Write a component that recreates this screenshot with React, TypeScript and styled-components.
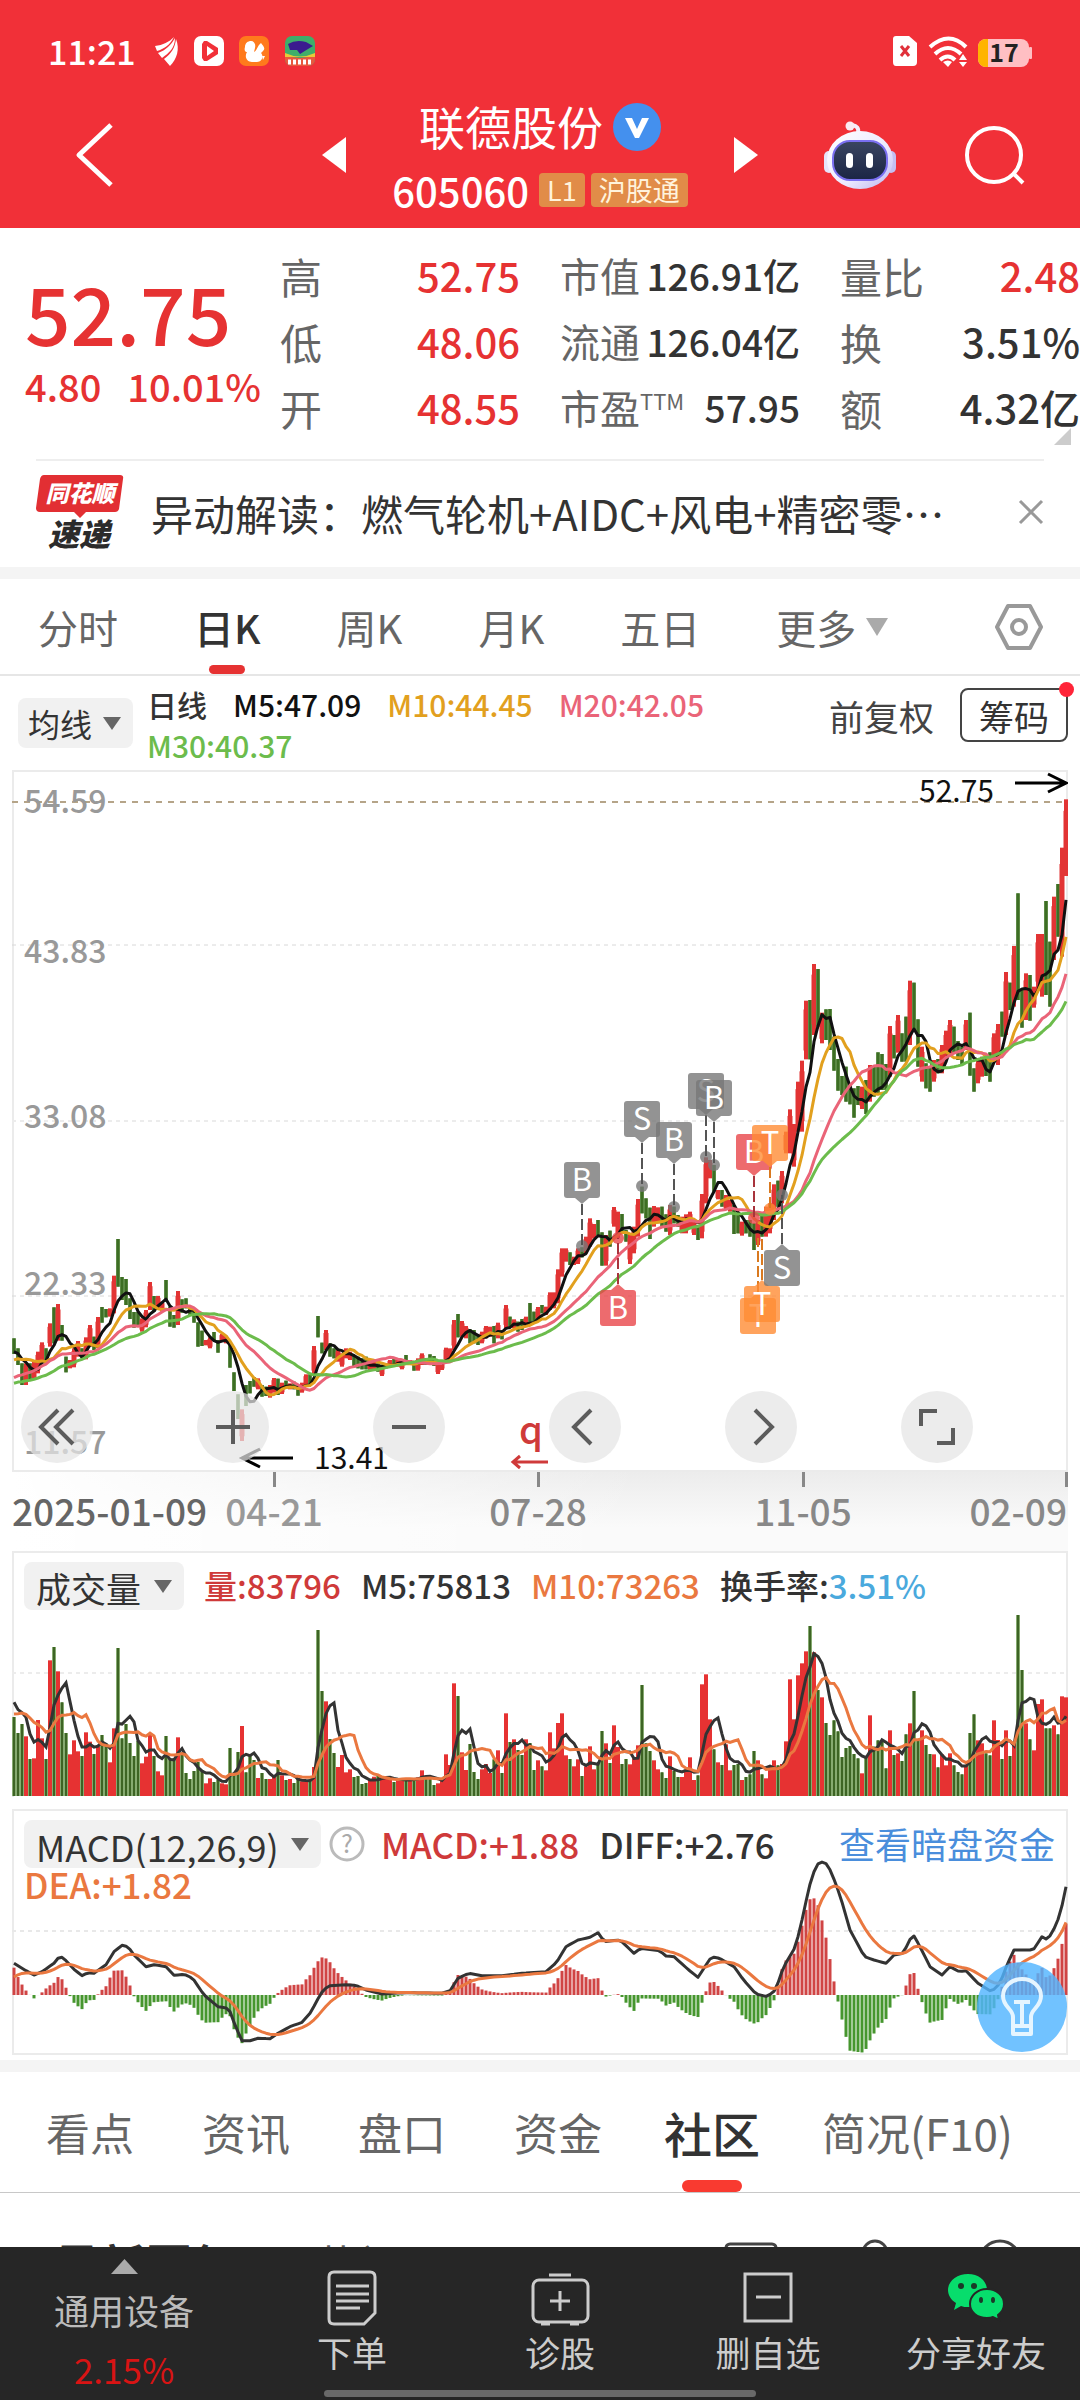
import React from "react";
import styled, { createGlobalStyle, css } from "styled-components";

/* ---------- market data ---------- */

type Bar = { v: number; up: boolean; high: number; low: number; close: number };

// Volume bar tops (768 is the floor) with the day's direction.
const VOLUME_SRC = `531g 579g 552g 589r 657g 655r 540r 595r 657g 361r 321g 394r 487g 579g 643r 601r 634r 648g 577r 605r 642g 619r
585g 610g 667r 565r 324g 595g 552g 609g 648g 603g 670r 650r 579r 648g 694r 706r 588g 655g 655g 592r 637g 699g 717g 693g 666g 690g
730r 715r 726g 719g 730r 733r 624g 700g 636g 558r 697g 645g 660g 714r 699g 717g 717r 706r 660g 706r 720g 717r 729g 715g 724r 724r
718g 681r 270g 453g 484r 597g 639g 681r 645r 697r 688r 711g 708g 732g 729g 720r 710r 706g 712r 715r 717r 726g 718r 718r 720g 718r
717g 712r 691r 709g 715g 735g 730r 718r 643r 675r 430r 468g 637r 690r 612g 696g 717g 688r 672r 699r 658g 631r 699g 520r 606g 598r
630g 645g 598r 609g 690g 661r 679g 691r 577r 625r 549r 520r 646r 657g 679r 658r 708g 679r 619r 688r 670g 573g 610r 669g 556r 621r
672g 657g 673r 655r 616r 435g 610g 633g 661r 688r 697g 714g 649r 693g 711g 711r 690r 652r 720r 706g 433r 403r 538r 628g 667r 675g
613r 691r 675g 672g 720r 711g 703g 633g 661r 703g 715r 679r 661r 676g 672r 604r 418r 538r 406r 370r 334r 258g 337r 450g 472r 549g
585g 541g 574g 651g 624g 618g 642g 655g 700r 651g 526r 620g 601g 601g 685g 571r 645g 640r 663g 583g 550r 453g 600g 571r 615g 642g
643r 682g 643r 676r 640r 676g 696g 703g 676r 579g 523g 601r 610r 640g 646g 541r 600r 657g 571r 648g 610r 225g 390g 550r 598g 631r
492r 478r 565g 565g 556r 583g 469r 472r`;

// High-low ranges, grouped by the level each block is measured from.
const RANGE_BLOCKS: { base: number; src: string }[] = [
  {
    base: 1080,
    src: `625-672 655-705 700-765 700-765 700-750 695-750 665-730 637-690 655-700 580-650 532-640 522-632 585-632 680-727 690-715
655-712 633-680 655-685 622-688 585-650 620-660 561-655 531-578 537-562 535-560 437-550 327-470 441-510 447-525 505-567 546-593
546-590 565-605 540-592 456-540 498-545 498-535 515-545 450-515 530-590 555-593 483-585 508-548 505-535 535-555 540-578 577-650
602-648 630-646 622-655 606-632 630-668 612-635 617-640 645-713 727-783 793-867 838-933 765-828 753-790 741-770 745-778 765-800
770-798 765-803 744-788 746-795 758-792 752-775 760-778 755-778 765-797 758-788 733-770 733-765 648-735 558-622 638-670 600-660
640-680 655-685 660-695 670-710 655-685 665-690 675-712 680-715 685-718 680-718 690-720 695-722 700-725 705-738 700-715 690-708
685-705 685-710 692-718 675-705 690-705 695-722 685-722 670-705 685-705 673-705 678-708 695-732 690-720 653-695 655-690 570-660
552-622 573-620 588-625 598-640 600-640 615-645 605-640 588-625 590-620 588-640 578-625 600-628 525-595 560-590 568-595 575-605
567-600 560-590 519-575 545-575 531-570`,
  },
  {
    base: 870,
    src: `735-760 740-765 697-750 697-745 628-730 565-650 565-605 577-615 590-615 565-612 562-592 530-580 475-560 492-535 480-525
517-617 525-617 512-560 441-500 455-535 462-520 510-545 520-612 500-580 417-530 380-460 415-475 443-537 438-500 442-490 440-498
463-515 435-525 440-490 465-500 470-520 463-520 455-505 480-525 495-540 402-535 292-430 300-355 315-395 390-418 390-440 405-450
420-455 435-522 465-520 485-527 480-520 480-530 490-570 480-555 465-530 440-530 430-520 373-480 362-440 333-430 215-280 148-280
192-320 65-215 2-215`,
  },
  {
    base: -30,
    src: `722-898 720-898 612-825 627-800 758-850 748-840 747-870 830-932 897-992 948-1005 920-1025 970-1033 985-1073 978-1035
980-1047 960-1062 915-1025 920-1010 877-1000 882-990 912-990 798-950 825-895 765-878 820-905 770-905 662-855 668-810 778-920
860-965 910-985 920-995 900-965 897-940 855-940 812-900 780-880 800-880 843-900 860-912 780-870 758-947 925-995 900-970 890-950
885-948 877-965 820-900 792-915 755-830 636-825 668-750 558-740 400-720 690-803 640-780 645-782 680-743 522-690 522-710 423-705
545-740 410-600 372-530 263-590 118-348`,
  },
];

const volumes = VOLUME_SRC.trim().split(/\s+/);
const ranges = RANGE_BLOCKS.flatMap(({ base, src }) =>
  src.trim().split(/\s+/).map((r) => r.split("-").map((n) => (Number(n) + base) / 3)),
);

const bars: Bar[] = volumes.map((token, i) => {
  const up = token.endsWith("r");
  const [high, low] = ranges[i] ?? ranges[ranges.length - 1];
  const span = low - high;
  return {
    v: (768 - parseInt(token, 10)) / 3,
    up,
    high,
    low,
    close: up ? high + span * 0.22 : low - span * 0.22,
  };
});
bars[bars.length - 1].close = bars[bars.length - 1].high;

const PITCH = 4;
const xAt = (i: number) => 2 + i * PITCH;

function movingAverage(values: number[], history: number[], n: number) {
  const all = [...history, ...values];
  return values.map((_, i) => {
    const end = i + history.length + 1;
    const part = all.slice(Math.max(0, end - n), end);
    return part.reduce((a, b) => a + b, 0) / part.length;
  });
}

const toPoints = (ys: number[]) => ys.map((y, i) => `${xAt(i)},${y.toFixed(1)}`).join(" ");

const priceHistory = [
  ...Array(10).fill(624), ...Array(10).fill(628), ...Array(5).fill(602), ...Array(5).fill(582),
];
const closes = bars.map((b) => b.close);
const vols = bars.map((b) => b.v);
const volumeHistory = [60, 66, 72, 74, 79, 100, 87, 83, 120];

// DIFF curve as [bar, level] knots; DEA is its 9-day EMA.
const DIFF_KNOTS: [number, number][] = [
  [0, 490], [3, 512], [5, 525], [7, 515], [10, 490], [11.5, 467], [13, 482], [15, 508], [17, 527], [18.5, 518], [20, 520],
  [23, 494], [25, 455], [27, 436], [28.5, 440], [30, 465], [33, 500], [35, 494], [38, 500], [40, 526], [42.6, 523],
  [44.7, 535], [47.5, 585], [51, 620], [53.7, 625], [55.4, 680], [57, 722], [59, 722], [61, 715], [64, 716], [66, 700],
  [69, 680], [72, 667], [74, 640], [75.4, 610], [76.7, 580], [78.5, 558], [82.6, 554], [85.5, 556], [88, 570], [92, 582],
  [98, 578], [107, 580], [109, 572], [111, 535], [113.6, 520], [117, 527], [122, 527], [127, 520], [133, 515], [135.6, 488],
  [138, 440], [141, 420], [144, 412], [146, 398], [147.6, 425], [151.5, 420], [155, 460], [156.6, 445], [161.4, 452],
  [163, 468], [165, 470], [168.7, 510], [171, 532], [173, 495], [174.4, 470], [176.4, 475], [180, 500], [182.4, 540],
  [185.5, 582], [188.3, 590], [190.4, 570], [192.4, 500], [195.4, 440], [197, 360], [198.8, 260], [200.4, 200], [201.4, 186],
  [202.8, 187], [204.3, 215], [206.6, 290], [209, 390], [212.6, 470], [215, 480], [218, 490], [220, 465], [222.4, 460],
  [223.8, 420], [225, 408], [226.5, 440], [229, 500], [232, 525], [234, 500], [236.3, 515], [238, 512], [241, 550],
  [244.4, 575], [246.5, 550], [248.4, 490], [250, 450], [254.8, 450], [257, 410], [258.4, 420], [260.3, 380], [261.6, 340],
  [263, 260],
];

const diff = bars.map((_, i) => {
  const k = Math.max(1, DIFF_KNOTS.findIndex(([x]) => x >= i));
  const [x0, y0] = DIFF_KNOTS[k - 1];
  const [x1, y1] = DIFF_KNOTS[k];
  return (y0 + ((y1 - y0) * (i - x0)) / (x1 - x0)) / 3 - 9;
});
const dea = diff.reduce<number[]>((acc, d, i) => {
  acc.push(i === 0 ? 168 : acc[i - 1] * 0.8 + d * 0.2);
  return acc;
}, []);
const MACD_ZERO = 186;

/* ---------- styles ---------- */

const GlobalStyle = createGlobalStyle`
  *, *::before, *::after { box-sizing: border-box; }
  body { margin: 0; background: #fff; font-family: "Noto Sans CJK SC", "Noto Sans", sans-serif; color: #333; }
  button, select { font: inherit; color: inherit; background: none; border: 0; margin: 0; padding: 0; cursor: pointer; }
  a { color: inherit; text-decoration: none; }
  svg { display: block; flex: none; }
  svg text { font-family: "Noto Sans CJK SC", "Noto Sans", sans-serif; }
`;

const RED = "#e63232";

const Screen = styled.div`
  display: flex;
  flex-direction: column;
  height: 100vh;
  overflow: hidden;
  white-space: nowrap;
`;

const Header = styled.header`
  flex: none;
  background: #f13038;
  color: #fff;
`;

const StatusBar = styled.div`
  display: flex;
  justify-content: space-between;
  align-items: center;
  height: 102px;
  padding: 0 48px;
`;

const StatusGroup = styled.div`
  display: flex;
  align-items: center;
  gap: 18px;
`;

const Clock = styled.span`
  font-size: 34px;
  font-weight: 500;
  line-height: 36px;
`;

const Nav = styled.nav`
  display: grid;
  grid-template-columns: 1fr 436px 1fr;
  height: 126px;
  padding: 0 55px 20px;
  align-items: center;
`;

const BackButton = styled.button`
  justify-self: start;
  padding-left: 15px;
`;

const NavEnd = styled.div`
  display: flex;
  justify-content: flex-end;
  align-items: center;
  gap: 69px;
`;

const Switcher = styled.div`
  display: flex;
  justify-content: space-between;
  align-items: center;
`;

const StockTitle = styled.div`
  display: flex;
  flex-direction: column;
  align-items: center;
  gap: 20px;
`;

const TitleLine = styled.div`
  display: flex;
  align-items: center;
  gap: 10px;
`;

const Name = styled.h1`
  margin: 0;
  padding-bottom: 4px;
  font-size: 46px;
  font-weight: 400;
  line-height: 46px;
`;

const CodeLine = styled(TitleLine)`
  gap: 6px;
`;

const Code = styled.span`
  margin-right: 4px;
  font-size: 40px;
  font-weight: 500;
  line-height: 36px;
`;

const Tag = styled.span`
  padding: 0 8px;
  border-radius: 4px;
  background: #e18c48;
  color: #fff3dc;
  font-size: 27px;
  line-height: 34px;
`;

const Quote = styled.section`
  position: relative;
  flex: none;
  display: grid;
  grid-template-columns: minmax(0, 1fr) repeat(3, 240px);
  column-gap: 40px;
  height: 231px;
  padding: 14px 0 0 25px;
`;

const Last = styled.div`
  display: flex;
  flex-direction: column;
  padding-top: 25px;
  color: ${RED};
`;

const Price = styled.strong`
  font-size: 80px;
  font-weight: 500;
  line-height: 88px;
`;

const Change = styled.div`
  display: flex;
  gap: 26px;
  font-size: 38px;
  font-weight: 500;
  line-height: 62px;
`;

const Stats = styled.dl<{ $label: number; $value: number }>`
  margin: 0;
  dt { font-size: ${(p) => p.$label}px; }
  dd { font-size: ${(p) => p.$value}px; }
`;

const StatRow = styled.div`
  display: flex;
  justify-content: space-between;
  align-items: center;
  height: 66px;
`;

const StatLabel = styled.dt`
  color: #666;
  sup { font-size: 22px; line-height: 1; vertical-align: 14px; }
`;

const StatValue = styled.dd<{ $red?: boolean }>`
  margin: 0;
  font-weight: 500;
  color: ${(p) => (p.$red ? RED : "#333")};
`;

const Corner = styled.i`
  position: absolute;
  right: 9px;
  bottom: 14px;
  border: solid transparent;
  border-width: 0 0 17px 17px;
  border-bottom-color: #ccc;
`;

const News = styled.section`
  flex: none;
  display: flex;
  align-items: center;
  height: 108px;
  margin: 0 36px;
  padding-bottom: 4px;
  border-top: 2px solid #eee;
`;

const NewsLink = styled.a`
  flex: 1;
  margin-left: 27px;
  font-size: 42px;
`;

const Band = styled.div`
  flex: none;
  height: 12px;
  background: #f4f4f4;
`;

const LowerBand = styled(Band)`
  margin-top: 5px;
`;

const PeriodTabs = styled.nav`
  flex: none;
  display: flex;
  align-items: stretch;
  gap: 76px;
  height: 97px;
  padding: 0 36px 0 38px;
  border-bottom: 2px solid #e6e6e6;
`;

const Tab = styled.button<{ $active?: boolean; $bar?: number; $color?: string }>`
  position: relative;
  display: flex;
  align-items: center;
  gap: 10px;
  color: #666;
  ${(p) =>
    p.$active &&
    css`
      color: #333;
      font-weight: 500;
      &::after {
        content: "";
        position: absolute;
        bottom: 0;
        left: 50%;
        width: ${p.$bar}px;
        height: ${p.$bar! > 40 ? 12 : 9}px;
        margin-left: -${p.$bar! / 2}px;
        border-radius: 6px;
        background: ${p.$color};
      }
    `}
`;

const PeriodTab = styled(Tab)`
  font-size: 40px;
`;

const Settings = styled.button`
  margin-left: auto;
`;

const MaRow = styled.section`
  flex: none;
  display: flex;
  height: 94px;
  padding: 0 12px 0 18px;
`;

const Pill = styled.label<{ $size: number }>`
  display: inline-flex;
  align-items: center;
  height: 48px;
  padding: 0 12px;
  gap: 12px;
  border-radius: 8px;
  background: #f1f1f1;
  font-size: ${(p) => p.$size}px;
  select { appearance: none; height: 48px; color: #333; outline: 0; }
`;

const MaPill = styled(Pill)`
  height: 50px;
  margin-top: 22px;
  padding: 0 12px 0 10px;
  gap: 10px;
`;

const MaValues = styled.div`
  flex: 1;
  display: flex;
  flex-wrap: wrap;
  align-content: flex-start;
  column-gap: 26px;
  padding: 8px 80px 0 14px;
`;

const Legend = styled.span<{ $c: string }>`
  color: ${(p) => p.$c};
  font-weight: 500;
  line-height: 41px;
  b { font-weight: 500; color: #4aa9dd; }
`;

const MaLegend = styled(Legend)`
  font-size: 30px;
`;

const MaActions = styled.div`
  display: flex;
  align-items: flex-start;
  gap: 26px;
  padding-top: 12px;
  font-size: 35px;
`;

const Plain = styled.button`
  height: 54px;
  color: #444;
`;

const ChipButton = styled.button`
  position: relative;
  width: 108px;
  height: 54px;
  border: 2px solid #444;
  border-radius: 8px;
  &::after {
    content: "";
    position: absolute;
    top: -8px;
    right: -8px;
    width: 15px;
    height: 15px;
    border-radius: 50%;
    background: #ff2438;
  }
`;

const Panel = styled.section`
  position: relative;
  flex: none;
  margin: 0 12px;
`;

const FullSvg = styled.svg`
  width: 100%;
  height: auto;
`;

const Controls = styled.div`
  position: absolute;
  left: 9px;
  right: 95px;
  bottom: 9px;
  display: flex;
  justify-content: space-between;
`;

const Round = styled.button`
  display: grid;
  place-items: center;
  width: 72px;
  height: 72px;
  border-radius: 50%;
  background: rgba(228, 228, 228, 0.72);
`;

const DateAxis = styled.div`
  flex: none;
  height: 79px;
  margin: 0 12px;
  background: linear-gradient(90deg, #fff, rgba(255, 255, 255, 0) 60%), linear-gradient(180deg, #ececec, #fafafa 70%);
`;

const VolumePanel = styled(Panel)`
  height: 246px;
  border: 2px solid #ebebeb;
  border-bottom: 0;
`;

const VolumeChart = styled(FullSvg)`
  margin: 0 -2px;
  width: calc(100% + 4px);
`;

const LegendRow = styled.div`
  display: flex;
  align-items: center;
  height: 48px;
  margin-top: 9px;
  padding-left: 10px;
  gap: 20px;
  font-size: 33px;
  ${Legend} { padding-bottom: 2px; }
`;

const MacdPanel = styled(Panel)`
  display: grid;
  margin-top: 12px;
  & > * { grid-area: 1 / 1; }
`;

const MacdInfo = styled.div`
  position: relative;
  padding: 2px 13px 0 2px;
`;

const MacdRow = styled(LegendRow)`
  font-size: 35px;
`;

const HelpButton = styled.button`
  margin: 0 -4px 0 -12px;
`;

const DarkPool = styled.a`
  margin-left: auto;
  padding-bottom: 2px;
  font-size: 36px;
  color: #4a8edc;
`;

const DeaRow = styled.div`
  padding-left: 10px;
  font-size: 35px;
  line-height: 32px;
  ${Legend} { line-height: 32px; }
`;

const Bulb = styled.button`
  position: absolute;
  right: 1px;
  bottom: 3px;
  width: 90px;
  height: 90px;
  border-radius: 50%;
  background: rgba(82, 181, 255, 0.82);
  display: grid;
  place-items: center;
`;

const SectionTabs = styled.nav`
  flex: none;
  display: flex;
  gap: 68px;
  height: 121px;
  padding-left: 46px;
  border-bottom: 1px solid #c8c8c8;
`;

const SectionTab = styled(Tab)`
  font-size: ${(p) => (p.$active ? 48 : 44)}px;
  margin: ${(p) => (p.$active ? "0 -6px" : "0")};
`;

const Feed = styled.section`
  flex: 1;
  min-height: 0;
  overflow: hidden;
  display: flex;
  align-items: flex-start;
  gap: 80px;
  padding: 40px 58px 0 54px;
`;

const FeedTab = styled.button<{ $on?: boolean }>`
  font-size: ${(p) => (p.$on ? 46 : 42)}px;
  font-weight: ${(p) => (p.$on ? 700 : 400)};
  line-height: 60px;
  color: ${(p) => (p.$on ? "#333" : "#666")};
`;

const FeedIcons = styled.div`
  display: flex;
  gap: 80px;
  margin-left: auto;
  padding-top: 6px;
`;

const BottomBar = styled.footer`
  position: relative;
  flex: none;
  display: grid;
  grid-template-columns: 248fr repeat(4, 208fr);
  height: 153px;
  background: #262626;
  color: #ccc;
  font-size: 35px;
  &::after {
    content: "";
    position: absolute;
    left: 30%;
    right: 30%;
    bottom: 3px;
    height: 7px;
    border-radius: 4px;
    background: #696969;
  }
`;

const Sector = styled.button`
  display: flex;
  flex-direction: column;
  align-items: center;
  padding-top: 12px;
  color: #bbb;
  line-height: 59px;
  svg { margin-bottom: 6px; }
  em { font-style: normal; color: #d81414; }
`;

const Action = styled.button`
  display: flex;
  flex-direction: column;
  align-items: center;
  padding-top: 22px;
  line-height: 50px;
`;

/* ---------- icons ---------- */

const Caret = ({ w = 18, h = 13, color = "#666", up = false }) => (
  <svg width={w} height={h} viewBox="0 0 18 14" preserveAspectRatio="none">
    <path d={up ? "M9 0 18 14H0z" : "M0 0h18L9 14z"} fill={color} />
  </svg>
);

const Robot = () => (
  <svg width="72" height="68" viewBox="0 0 72 68">
    <defs>
      <linearGradient id="shell" x1="0" y1="0" x2="1" y2="1">
        <stop offset="0" stopColor="#fff" />
        <stop offset="0.6" stopColor="#eceaff" />
        <stop offset="1" stopColor="#b9b2ee" />
      </linearGradient>
      <linearGradient id="face" x1="0" y1="0" x2="0" y2="1">
        <stop offset="0" stopColor="#3a4560" />
        <stop offset="1" stopColor="#1b2545" />
      </linearGradient>
    </defs>
    <path d="M34 12c1-5-1-7-6-8" fill="none" stroke="#f4eefc" strokeWidth="4" strokeLinecap="round" />
    <circle cx="26" cy="5" r="4.5" fill="#fbeaf2" />
    <rect x="0" y="30" width="10" height="22" rx="5" fill="#e6e4fb" />
    <rect x="62" y="30" width="10" height="22" rx="5" fill="#c4bff2" />
    <ellipse cx="36" cy="39" rx="33" ry="29" fill="url(#shell)" />
    <rect x="9" y="20" width="54" height="39" rx="17" fill="url(#face)" stroke="#7a6ff0" strokeWidth="2" />
    <rect x="22" y="32" width="7" height="15" rx="3.5" fill="#fff" />
    <rect x="42" y="32" width="7" height="15" rx="3.5" fill="#fff" />
  </svg>
);

const Logo = () => (
  <svg width="88" height="76" viewBox="0 0 88 76" role="img" aria-label="同花顺速递">
    <path d="M8 1h76q4 0 3 4l-4 30q-1 3-4 3H50l-6 6-6-6H4q-4 0-4-4L4 5q1-4 4-4z" fill="#e22f33" />
    <text x="44" y="28" textAnchor="middle" fontSize="23" fontWeight="900" fontStyle="italic" fill="#fff">同花顺</text>
    <text x="43" y="72" textAnchor="middle" fontSize="31" fontWeight="900" fontStyle="italic" fill="#2b2b2b">速递</text>
  </svg>
);

const StatusLeft = () => (
  <svg width="162" height="32" viewBox="0 0 162 32">
    <path d="M1 11C9 10 15 7 20 2c-4 8-10 12-17 14zM4 18c8-3 13-8 17-15 0 10-6 15-13 20zM10 24c7-5 11-11 12-20 4 10 1 20-6 27z" fill="#fff" />
    <rect x="40" y="1" width="30" height="30" rx="7" fill="#fff" />
    <path d="M50 6h3l11 7v6l-11 7h-3l-2-3V9z" fill="#f13038" />
    <path d="M53 11v10l7-5z" fill="#fff" />
    <rect x="85" y="1" width="30" height="30" rx="7" fill="#ff7a1c" />
    <path d="M91 12c0-4 3-6 6-6s5 3 4 7l-1 4c3-1 3-6 7-9 2 3 5 5 2 8l-2 2c3 3 1 9-4 9h-5c-5 0-8-5-5-10-2 0-3-2-2-5z" fill="#fff" />
    <path d="M108 21l3 0-2 4z" fill="#fff" />
    <rect x="131" y="1" width="30" height="30" rx="7" fill="#3fae6a" />
    <path d="M131 20q15 6 30 0v4a7 7 0 0 1-7 7h-16a7 7 0 0 1-7-7z" fill="#e9573f" />
    <path d="M131 18q15 7 30 0v4h-30z" fill="#e8c93a" />
    <path d="M134 9q8-5 18-2l7 4-5 3-8 5-3-4h-7z" fill="#3b1b8f" />
    <path d="M134 27h24" stroke="#fff" strokeWidth="5" strokeDasharray="3 2" />
  </svg>
);

const StatusRight = () => (
  <svg width="140" height="32" viewBox="0 0 140 32">
    <path d="M4 1h13l8 7v19q0 4-4 4H4q-3 0-3-4V4q0-3 3-3z" fill="#fff" />
    <path d="M9 11l8 10M17 11l-8 10" stroke="#e0303a" strokeWidth="3" />
    <g fill="none" stroke="#fff" strokeWidth="4">
      <path d="M38 12q19-17 36 0M43 19q13-12 26 0M48 25q8-7 15 0" />
    </g>
    <path d="M51 27l5 5 4-5q-4-3-9 0z" fill="#fff" />
    <path d="M71 19l4 6h-8zM67 27h8l-4 5z" fill="#fff" />
    <rect x="86" y="4" width="51" height="28" rx="8" fill="#ffbfc3" />
    <path d="M94 4h2v28h-2a8 8 0 0 1-8-8V12a8 8 0 0 1 8-8z" fill="#ffb400" />
    <rect x="137" y="12" width="3" height="12" rx="1" fill="#ffbfc3" />
    <text x="112" y="27" textAnchor="middle" fontSize="25" fontWeight="700" fill="#222">17</text>
  </svg>
);

/* ---------- chart pieces ---------- */

const GRAY = "rgba(120,120,120,.8)";
const ROSE = "rgba(233,70,74,.8)";
const ORANGE = "rgba(255,140,52,.8)";

type MarkProps = { x: number; y: number; to: number; label: string; color: string; ink?: string; dot?: boolean };

// A trade tag: (x, y) is the badge centre, `to` the level its dashed stem reaches.
const Mark = ({ x, y, to, label, color, ink = "#555", dot = true }: MarkProps) => {
  const dir = to > y ? 1 : -1;
  return (
    <g>
      {dot && <circle cx={x} cy={to} r="6" fill={color} />}
      <path d={`M${x} ${y + dir * 24}V${to}`} stroke={ink} strokeWidth="2" strokeDasharray="11 4" />
      <rect x={x - 18} y={y - 18} width="36" height="36" rx="3" fill={color} />
      <path d={`M${x - 7} ${y + dir * 18}h14l-7 ${dir * 6}z`} fill={color} />
      <text x={x} y={y + 11} textAnchor="middle" fontSize="31" fill="#fff">{label}</text>
    </g>
  );
};

const LEVELS = [
  { label: "54.59", y: 31, line: 32, stroke: "#b5a488", dash: "6 6", w: 2 },
  { label: "43.83", y: 181, line: 175, stroke: "#d8d8d8", dash: "4 4", w: 1 },
  { label: "33.08", y: 346, line: 351, stroke: "#ececec", dash: "4 4", w: 2 },
  { label: "22.33", y: 513, line: 526, stroke: "#d8d8d8", dash: "4 4", w: 1 },
  { label: "11.57", y: 672, line: 0, stroke: "", dash: "", w: 0 },
];

const AVERAGES = [
  { n: 5, color: "#111" },
  { n: 10, color: "#e2a01e" },
  { n: 20, color: "#ea6478" },
  { n: 30, color: "#6cbc4c" },
];

const PriceChart = () => (
  <FullSvg viewBox="0 0 1056 702" role="img" aria-label="日K线">
    <rect x="1" y="1" width="1054" height="700" fill="#fff" stroke="#ebebeb" strokeWidth="2" />
    {LEVELS.map((l) => (
      <React.Fragment key={l.label}>
        {l.w > 0 && <path d={`M0 ${l.line}H1054`} stroke={l.stroke} strokeWidth={l.w} strokeDasharray={l.dash} />}
        <text x="12" y={l.y + 12} fontSize="32" fontWeight="500" fill="#999">{l.label}</text>
      </React.Fragment>
    ))}
    {bars.map((b, i) => {
      const inset = (b.low - b.high) * 0.15;
      const body = b.low - b.high - inset * 2;
      return b.up ? (
        <g key={i} fill="#e23434">
          <rect x={xAt(i) - 2} y={b.high} width="4" height={b.low - b.high} />
          <rect x={xAt(i) - 2.5} y={b.high + inset} width="5" height={body} />
        </g>
      ) : (
        <g key={i}>
          <rect x={xAt(i) - 2} y={b.high} width="4" height={b.low - b.high} fill="#7da566" />
          <rect x={xAt(i) - 1.5} y={b.high} width="3" height={b.low - b.high} fill="#3d6e24" />
        </g>
      );
    })}
    {AVERAGES.map((a) => (
      <polyline
        key={a.n}
        points={toPoints(movingAverage(closes, priceHistory, a.n))}
        fill="none"
        stroke={a.color}
        strokeWidth="3"
        strokeLinejoin="round"
      />
    ))}
    <Mark x={570} y={410} to={476} label="B" color={GRAY} />
    <Mark x={630} y={349} to={416} label="S" color={GRAY} />
    <Mark x={662} y={370} to={437} label="B" color={GRAY} />
    <Mark x={694} y={321} to={387} label="S" color={GRAY} />
    <Mark x={702} y={328} to={395} label="B" color={GRAY} />
    <Mark x={742} y={382} to={448} label="B" color={ROSE} ink="#a8333c" />
    <Mark x={758} y={373} to={439} label="T" color={ORANGE} ink="#d9791f" />
    <Mark x={606} y={538} to={468} label="B" color={ROSE} ink="#a8333c" />
    <Mark x={746} y={546} to={468} label="T" color={ORANGE} ink="#d9791f" dot={false} />
    <Mark x={750} y={534} to={468} label="T" color={ORANGE} ink="#d9791f" dot={false} />
    <Mark x={770} y={498} to={425} label="S" color={GRAY} />
    <text x="907" y="32" fontSize="30" fill="#111">52.75</text>
    <path d="M1003 13h50M1036 4l18 9-18 9" fill="none" stroke="#000" strokeWidth="3" />
    <text x="302" y="699" fontSize="30" fill="#111">13.41</text>
    <path d="M281 688h-48M248 679l-18 9 18 9" fill="none" stroke="#000" strokeWidth="3" />
    <text x="507" y="674" fontSize="38" fontWeight="500" fill="#cf3a3a">q</text>
    <path d="M536 692h-34M508 686l-7 6 7 6" fill="none" stroke="#cf3a3a" strokeWidth="3" />
  </FullSvg>
);

const CONTROL_ICONS: { label: string; d: string }[] = [
  { label: "最早", d: "M20 2 3 19l17 17M35 2 18 19l17 17" },
  { label: "放大", d: "M19 2v34M2 19h34" },
  { label: "缩小", d: "M2 19h34" },
  { label: "向左", d: "M25 2 8 19l17 17" },
  { label: "向右", d: "M13 2l17 17-17 17" },
  { label: "全屏", d: "M3 18V3h16M35 20v15H19" },
];

const DATES = [
  { label: "2025-01-09", x: 0, tick: -9, anchor: "start", color: "#666" },
  { label: "04-21", x: 262, tick: 262, anchor: "middle", color: "#999" },
  { label: "07-28", x: 526, tick: 526, anchor: "middle", color: "#888" },
  { label: "11-05", x: 791, tick: 791, anchor: "middle", color: "#888" },
  { label: "02-09", x: 1055, tick: 1054, anchor: "end", color: "#888" },
] as const;

type StatItem = { label: string; sup?: string; value: string; red?: boolean };

const STAT_GROUPS: { labelSize: number; valueSize: number; items: StatItem[] }[] = [
  {
    labelSize: 42,
    valueSize: 40,
    items: [
      { label: "高", value: "52.75", red: true },
      { label: "低", value: "48.06", red: true },
      { label: "开", value: "48.55", red: true },
    ],
  },
  {
    labelSize: 40,
    valueSize: 37,
    items: [
      { label: "市值", value: "126.91亿" },
      { label: "流通", value: "126.04亿" },
      { label: "市盈", sup: "TTM", value: "57.95" },
    ],
  },
  {
    labelSize: 42,
    valueSize: 40,
    items: [
      { label: "量比", value: "2.48", red: true },
      { label: "换", value: "3.51%" },
      { label: "额", value: "4.32亿" },
    ],
  },
];

const App = () => (
  <Screen>
    <GlobalStyle />
    <Header>
      <StatusBar>
        <StatusGroup>
          <Clock>11:21</Clock>
          <StatusLeft />
        </StatusGroup>
        <StatusRight />
      </StatusBar>
      <Nav>
        <BackButton aria-label="返回">
          <svg width="48" height="66" viewBox="0 0 48 66">
            <path d="M41 3 9 33l32 30" fill="none" stroke="#fff" strokeWidth="5" strokeLinejoin="round" />
          </svg>
        </BackButton>
        <Switcher>
          <button aria-label="上一只">
            <svg width="24" height="36" viewBox="0 0 24 36"><path d="M24 0v36L0 18z" fill="#fff" /></svg>
          </button>
          <StockTitle>
            <TitleLine>
              <Name>联德股份</Name>
              <svg width="48" height="48" viewBox="0 0 48 48">
                <circle cx="24" cy="24" r="24" fill="#4490ee" />
                <path d="M12 15h7l5 11 5-11h7L26 35h-4z" fill="#fff" />
              </svg>
            </TitleLine>
            <CodeLine>
              <Code>605060</Code>
              <Tag>L1</Tag>
              <Tag>沪股通</Tag>
            </CodeLine>
          </StockTitle>
          <button aria-label="下一只">
            <svg width="24" height="36" viewBox="0 0 24 36"><path d="M0 0v36l24-18z" fill="#fff" /></svg>
          </button>
        </Switcher>
        <NavEnd>
          <button aria-label="智能助手"><Robot /></button>
          <button aria-label="搜索">
            <svg width="60" height="60" viewBox="0 0 60 60" fill="none" stroke="#fff" strokeWidth="4">
              <circle cx="29" cy="30" r="27" />
              <path d="M48 48l10 10" />
            </svg>
          </button>
        </NavEnd>
      </Nav>
    </Header>

    <Quote>
      <Last>
        <Price>52.75</Price>
        <Change><span>4.80</span><span>10.01%</span></Change>
      </Last>
      {STAT_GROUPS.map((group) => (
        <Stats key={group.items[0].label} $label={group.labelSize} $value={group.valueSize}>
          {group.items.map((s) => (
            <StatRow key={s.label}>
              <StatLabel>{s.label}{s.sup && <sup>{s.sup}</sup>}</StatLabel>
              <StatValue $red={s.red}>{s.value}</StatValue>
            </StatRow>
          ))}
        </Stats>
      ))}
      <Corner />
    </Quote>

    <News>
      <Logo />
      <NewsLink href="#news">异动解读：燃气轮机+AIDC+风电+精密零…</NewsLink>
      <button aria-label="关闭">
        <svg width="26" height="26" viewBox="0 0 26 26">
          <path d="M2 2l22 22M24 2 2 24" stroke="#999" strokeWidth="3" />
        </svg>
      </button>
    </News>
    <Band />

    <PeriodTabs>
      <PeriodTab>分时</PeriodTab>
      <PeriodTab $active $bar={36} $color={RED}>日K</PeriodTab>
      <PeriodTab>周K</PeriodTab>
      <PeriodTab>月K</PeriodTab>
      <PeriodTab>五日</PeriodTab>
      <PeriodTab>更多<Caret w={22} h={18} color="#aaa" /></PeriodTab>
      <Settings aria-label="设置">
        <svg width="50" height="48" viewBox="0 0 50 48" fill="none" stroke="#999" strokeLinejoin="round">
          <path d="M14 3h22l11 21-11 21H14L3 24z" strokeWidth="4" />
          <circle cx="25" cy="24" r="7" strokeWidth="4" />
        </svg>
      </Settings>
    </PeriodTabs>

    <MaRow>
      <MaPill $size={32}>
        <select aria-label="主图指标"><option>均线</option></select>
        <Caret />
      </MaPill>
      <MaValues>
        <MaLegend $c="#333">日线</MaLegend>
        <MaLegend $c="#111">M5:47.09</MaLegend>
        <MaLegend $c="#e2a01e">M10:44.45</MaLegend>
        <MaLegend $c="#ea6478">M20:42.05</MaLegend>
        <MaLegend $c="#6cbc4c">M30:40.37</MaLegend>
      </MaValues>
      <MaActions>
        <Plain>前复权</Plain>
        <ChipButton>筹码</ChipButton>
      </MaActions>
    </MaRow>

    <Panel>
      <PriceChart />
      <Controls>
        {CONTROL_ICONS.map((c) => (
          <Round key={c.label} aria-label={c.label}>
            <svg width="38" height="38" viewBox="0 0 38 38" fill="none" stroke="#5c5c5c" strokeWidth="4"><path d={c.d} /></svg>
          </Round>
        ))}
      </Controls>
    </Panel>

    <DateAxis>
      <FullSvg viewBox="0 0 1056 79">
        {DATES.map((d) => (
          <React.Fragment key={d.label}>
            <rect x={d.tick - 1} y="0" width="3" height="15" fill="#888" />
            <text x={d.x} y="54" textAnchor={d.anchor} fontSize="37" fontWeight="500" fill={d.color}>{d.label}</text>
          </React.Fragment>
        ))}
      </FullSvg>
    </DateAxis>

    <VolumePanel>
      <LegendRow>
        <Pill $size={35}>
          <select aria-label="副图指标"><option>成交量</option></select>
          <Caret />
        </Pill>
        <Legend $c="#cf3a3a">量:83796</Legend>
        <Legend $c="#333">M5:75813</Legend>
        <Legend $c="#ea7840">M10:73263</Legend>
        <Legend $c="#333">换手率:<b>3.51%</b></Legend>
      </LegendRow>
      <VolumeChart viewBox="0 0 1056 187" role="img" aria-label="成交量">
        <path d="M0 63H1056" stroke="#ececec" strokeWidth="2" strokeDasharray="4 4" />
        {bars.map((b, i) =>
          b.up ? (
            <rect key={i} x={xAt(i) - 2} y={186 - b.v} width="4" height={b.v} fill="#e63232" />
          ) : (
            <g key={i}>
              <rect x={xAt(i) - 2} y={186 - b.v} width="4" height={b.v} fill="#86aa70" />
              <rect x={xAt(i) - 1} y={186 - b.v} width="2" height={b.v} fill="#3d6424" />
            </g>
          ),
        )}
        <polyline points={toPoints(movingAverage(vols, volumeHistory, 5).map((v) => 186 - v))} fill="none" stroke="#333" strokeWidth="3" />
        <polyline points={toPoints(movingAverage(vols, volumeHistory, 10).map((v) => 186 - v))} fill="none" stroke="#ea7840" strokeWidth="3" />
      </VolumeChart>
    </VolumePanel>

    <MacdPanel>
      <FullSvg viewBox="0 0 1056 246" role="img" aria-label="MACD">
        <rect x="1" y="1" width="1054" height="244" fill="#fff" stroke="#ebebeb" strokeWidth="2" />
        <path d="M0 122H1056" stroke="#e8e8e8" strokeWidth="2" strokeDasharray="4 4" />
        {diff.map((d, i) => {
          const h = 2 * (dea[i] - d);
          return (
            <rect
              key={i}
              x={xAt(i) - 1.5}
              y={h > 0 ? MACD_ZERO - h : MACD_ZERO}
              width="3"
              height={Math.min(Math.abs(h), 58 + Math.max(0, h))}
              fill={h > 0 ? "#d04444" : "#46962e"}
            />
          );
        })}
        <polyline points={toPoints(diff)} fill="none" stroke="#333" strokeWidth="3" strokeLinejoin="round" />
        <polyline points={toPoints(dea)} fill="none" stroke="#ea7840" strokeWidth="3" strokeLinejoin="round" />
      </FullSvg>
      <MacdInfo>
        <MacdRow>
          <Pill $size={36}>
            <select aria-label="副图指标二"><option>MACD(12,26,9)</option></select>
            <Caret />
          </Pill>
          <HelpButton aria-label="指标说明">
            <svg width="36" height="36" viewBox="0 0 36 36">
              <circle cx="18" cy="18" r="16" fill="none" stroke="#bbb" strokeWidth="3" />
              <text x="18" y="27" textAnchor="middle" fontSize="25" fill="#aaa">?</text>
            </svg>
          </HelpButton>
          <Legend $c="#cf3a3a">MACD:+1.88</Legend>
          <Legend $c="#333">DIFF:+2.76</Legend>
          <DarkPool href="#fund">查看暗盘资金</DarkPool>
        </MacdRow>
        <DeaRow><Legend $c="#ea7840">DEA:+1.82</Legend></DeaRow>
      </MacdInfo>
      <Bulb aria-label="提示">
        <svg width="44" height="60" viewBox="0 0 44 60" fill="none" stroke="#e6f5ff" strokeWidth="4" strokeLinejoin="round">
          <path d="M13 40c0-8-10-10-10-21a19 17 0 0 1 38 0c0 11-10 13-10 21v17H13zM13 49h18M14 25h16M22 25v24" />
        </svg>
      </Bulb>
    </MacdPanel>
    <LowerBand />

    <SectionTabs>
      <SectionTab>看点</SectionTab>
      <SectionTab>资讯</SectionTab>
      <SectionTab>盘口</SectionTab>
      <SectionTab>资金</SectionTab>
      <SectionTab $active $bar={60} $color="#f93a30">社区</SectionTab>
      <SectionTab>简况(F10)</SectionTab>
    </SectionTabs>

    <Feed>
      <FeedTab $on>最新回复</FeedTab>
      <FeedTab>热门</FeedTab>
      <FeedIcons>
        <svg width="54" height="44" viewBox="0 0 54 44" fill="none" stroke="#444" strokeWidth="3"><rect x="2" y="5" width="50" height="36" rx="4" /></svg>
        <svg width="40" height="44" viewBox="0 0 40 44" fill="none" stroke="#444" strokeWidth="3"><circle cx="17" cy="14" r="12" /></svg>
        <svg width="44" height="44" viewBox="0 0 44 44" fill="none" stroke="#444" strokeWidth="3"><circle cx="22" cy="22" r="20" /></svg>
      </FeedIcons>
    </Feed>

    <BottomBar>
      <Sector>
        <Caret w={27} h={15} color="#aaa" up />
        <span>通用设备</span>
        <em>2.15%</em>
      </Sector>
      <Action>
        <svg width="50" height="58" viewBox="0 0 50 58" fill="none" stroke="#ccc" strokeWidth="3">
          <path d="M7 3h36q5 0 5 5v36L37 55H7q-5 0-5-5V8q0-5 5-5zM9 17h33M9 25h33M9 32h33M9 39h24" />
        </svg>
        下单
      </Action>
      <Action>
        <svg width="60" height="58" viewBox="0 0 60 58" fill="none" stroke="#ccc" strokeWidth="3">
          <rect x="3" y="11" width="55" height="42" rx="6" />
          <path d="M19 6h22M30 22v20M20 32h20M11 55h9M40 55h9" />
        </svg>
        诊股
      </Action>
      <Action>
        <svg width="50" height="58" viewBox="0 0 50 58" fill="none" stroke="#ccc" strokeWidth="3">
          <rect x="2" y="5" width="46" height="47" />
          <path d="M13 28h25" />
        </svg>
        删自选
      </Action>
      <Action>
        <svg width="56" height="58" viewBox="0 0 56 58">
          <path d="M20 5c11 0 19 7 19 16 0 10-8 17-19 17-2 0-5 0-7-1l-7 4 2-7c-5-3-8-8-8-13C0 12 9 5 20 5z" fill="#07dd6c" />
          <path d="M39 20c9 0 17 6 17 15 0 4-2 8-6 11l1 5-6-3c-2 1-4 1-6 1-10 0-17-6-17-14s7-15 17-15z" fill="#07dd6c" stroke="#262626" strokeWidth="2" />
          <g fill="#1a3a28">
            <ellipse cx="13" cy="17" rx="3" ry="3" /><ellipse cx="26" cy="17" rx="3" ry="3" />
            <ellipse cx="33" cy="31" rx="2" ry="3" /><ellipse cx="45" cy="31" rx="2" ry="3" />
          </g>
        </svg>
        分享好友
      </Action>
    </BottomBar>
  </Screen>
);

export default App;
